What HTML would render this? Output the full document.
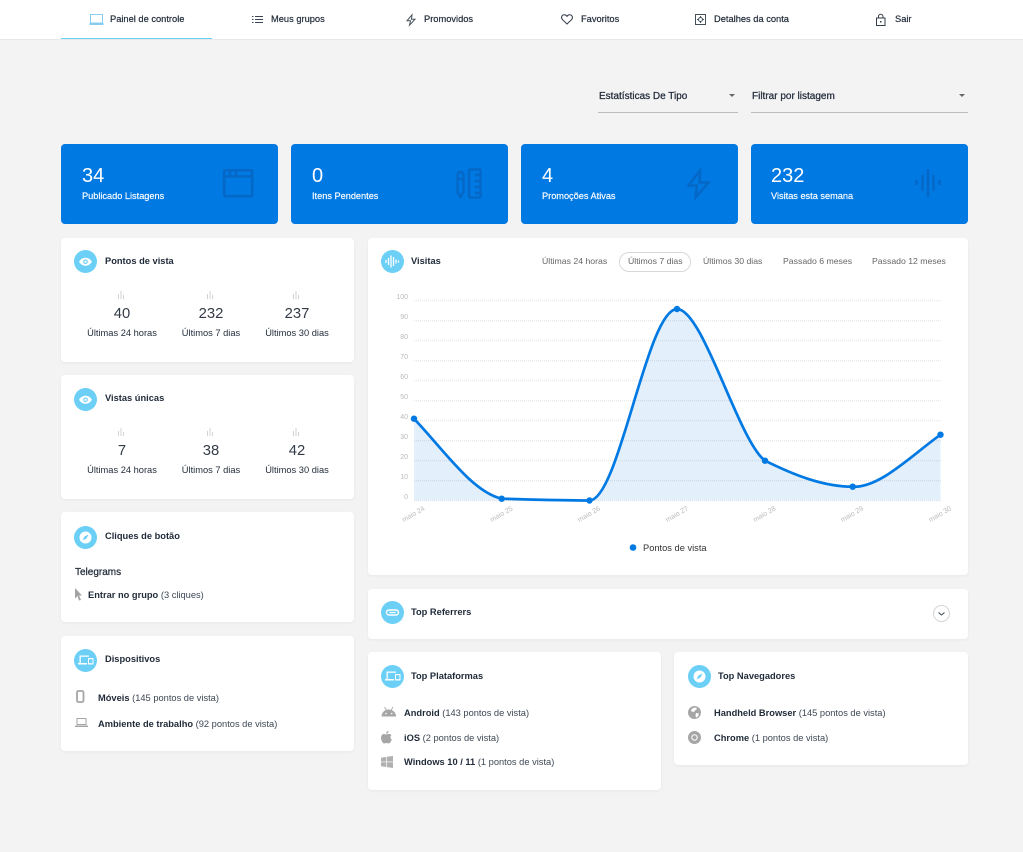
<!DOCTYPE html>
<html lang="pt"><head><meta charset="utf-8"><title>Painel de controle</title>
<style>
*{box-sizing:border-box}
html,body{margin:0;padding:0}
body{width:1023px;height:852px;background:#f3f3f3;position:relative;overflow:hidden;font-family:"Liberation Sans",sans-serif;color:#1f2a38;font-size:9.3px}
.t{position:absolute;line-height:14px;white-space:nowrap;margin-top:2px}
.b{font-weight:700}
.c{transform:translateX(-50%)}
.card{position:absolute;background:#fff;border-radius:4px;box-shadow:0 1px 3px rgba(0,0,0,.05)}
.stat{position:absolute;top:144px;width:217px;height:80px;background:#0079e3;border-radius:4px}
.num{position:absolute;left:21px;top:20px;font-size:20px;line-height:24px;color:#fff}
.lab{position:absolute;left:21px;top:45px;line-height:14px;color:#fff;font-size:9.2px;white-space:nowrap;-webkit-text-stroke:.15px #fff}
.big{font-size:14.8px;color:#333b47;margin-top:1px}
.g{color:#3d4754}
svg{position:absolute;overflow:visible}
.tab{color:#666;font-size:8.7px}
.sel{font-size:10px;-webkit-text-stroke:.25px #1f2a38}
.nav{margin-top:0;top:12px;-webkit-text-stroke:.2px #1f2a38}
</style></head><body>

<div style="position:absolute;left:0;top:0;width:1023px;height:40px;background:#fff;border-bottom:1px solid #e8e8e8"></div>
<div style="position:absolute;left:61px;top:38px;width:151px;height:1px;background:#6bcff6"></div>

<svg style="left:90px;top:14px" width="13" height="11" viewBox="0 0 13 11" fill="none" stroke="#86cdf0" stroke-width="1"><rect x=".5" y=".5" width="12" height="8.5"/><path d="M0 9.500h13v1H0z" fill="#86cdf0"/></svg>
<div class="t nav" style="left:110px">Painel de controle</div>

<svg style="left:252px;top:16px" width="11" height="7" viewBox="0 0 11 7" stroke="#3a4450" stroke-width="1"><path d="M3 .5h8M3 3.500h8M3 6.500h8M0 .5h1.500M0 3.500h1.500M0 6.500h1.500"/></svg>
<div class="t nav" style="left:271px">Meus grupos</div>

<svg style="left:406px;top:14px" width="10" height="12" viewBox="0 0 10 12" fill="none" stroke="#46505c" stroke-width="1"><path d="M6 .8 1 6.800h3.500L3.500 11.200 9 5.200H5.500z"/></svg>
<div class="t nav" style="left:424px">Promovidos</div>

<svg style="left:561px;top:14px" width="12" height="11" viewBox="0 0 12 11" fill="none" stroke="#333d49" stroke-width="1"><path d="M6 10 1.200 5.300C-.3 3.300 1 .8 3.300.8 4.500.8 5.400 1.400 6 2.300 6.600 1.400 7.500.8 8.700.8 11 .8 12.300 3.300 10.800 5.300z"/></svg>
<div class="t nav" style="left:581px">Favoritos</div>

<svg style="left:695px;top:14px" width="11" height="11" viewBox="0 0 11 11" fill="none" stroke="#46505c" stroke-width="1"><rect x=".5" y=".5" width="10" height="10"/><circle cx="5.500" cy="5.500" r="2"/><path d="M5.500 2v1.200M5.500 7.800V9M2 5.500h1.200M7.800 5.500H9"/></svg>
<div class="t nav" style="left:714px">Detalhes da conta</div>

<svg style="left:876px;top:14px" width="10" height="12" viewBox="0 0 10 12" fill="none" stroke="#333d49" stroke-width="1"><rect x=".5" y="4" width="8.500" height="7.500"/><path d="M2.500 4V2.500a2.200 2.200 0 0 1 4.500 0V4"/><path d="M4 7h1.500v1.500H4z" fill="#333d49" stroke="none"/></svg>
<div class="t nav" style="left:895px">Sair</div>

<div class="t sel" style="left:599px;top:87px;margin-top:3px">Estatísticas De Tipo</div>
<div style="position:absolute;left:598px;top:112px;width:140px;height:1px;background:#bdbdbd"></div>
<div style="position:absolute;left:729px;top:94px;border:3.5px solid transparent;border-top-color:#666;border-bottom:0"></div>
<div class="t sel" style="left:752px;top:87px;margin-top:3px">Filtrar por listagem</div>
<div style="position:absolute;left:751px;top:112px;width:217px;height:1px;background:#bdbdbd"></div>
<div style="position:absolute;left:959px;top:94px;border:3.5px solid transparent;border-top-color:#666;border-bottom:0"></div>

<div class="stat" style="left:61px"><div class="num">34</div><div class="lab">Publicado Listagens</div>
<svg style="left:162px;top:25px" width="31" height="29" viewBox="0 0 31 29" fill="none" stroke="#0568c6" stroke-width="2.500"><rect x="1.200" y="1.200" width="28" height="26" rx="1"/><path d="M1.200 7.500h28M7 1.500v6M13 1.500v6"/></svg></div>
<div class="stat" style="left:291px"><div class="num">0</div><div class="lab">Itens Pendentes</div>
<svg style="left:165px;top:24px" width="26" height="31" viewBox="0 0 26 31" fill="none" stroke="#0568c6" stroke-width="2.400"><path d="M1.500 7a3 3 0 0 1 6 0v17l-3 5-3-5zM1.500 11h6"/><rect x="13" y="1.500" width="11.500" height="28" rx="1"/><path d="M19 7h5.500M19 13h5.500M19 19h5.500M19 25h5.500"/></svg></div>
<div class="stat" style="left:521px"><div class="num">4</div><div class="lab">Promoções Ativas</div>
<svg style="left:166px;top:25px" width="23" height="30" viewBox="0 0 23 30" fill="none" stroke="#0568c6" stroke-width="2.500"><path d="M13 1.500 1.500 16.500H10L8.500 28.500 21.500 13.500H12.500z"/></svg></div>
<div class="stat" style="left:751px"><div class="num" style="left:20px">232</div><div class="lab" style="left:20px">Visitas esta semana</div>
<svg style="left:164px;top:25px" width="26" height="28" viewBox="0 0 26 28" stroke="#0568c6" stroke-width="2.500"><path d="M1.500 11v5M7.500 6v16M13 0v28M18.500 6v16M24.500 11v5"/></svg></div>

<!-- Pontos de vista -->
<div class="card" style="left:61px;top:238px;width:293px;height:124px"></div>
<svg style="left:74px;top:250px" width="23" height="23" viewBox="0 0 23 23"><circle cx="11.500" cy="11.500" r="11.500" fill="#6bcff6"/><path d="M5 11.800C7 8.800 9 7.800 11.500 7.800S16 8.800 18 11.800C16 14.800 14 15.800 11.500 15.800S7 14.800 5 11.800z" fill="#fff"/><circle cx="11.500" cy="11.800" r="2.300" fill="#6bcff6"/><circle cx="11.500" cy="11.800" r="1.200" fill="#fff"/></svg>
<div class="t b" style="left:105px;top:252px">Pontos de vista</div>
<svg style="left:118px;top:291px" width="7" height="8" stroke="#d2d2d2" stroke-width="1"><path d="M.5 8V3M3 8V0M5.500 8V4"/></svg>
<svg style="left:207px;top:291px" width="7" height="8" stroke="#d2d2d2" stroke-width="1"><path d="M.5 8V3M3 8V0M5.500 8V4"/></svg>
<svg style="left:293px;top:291px" width="7" height="8" stroke="#d2d2d2" stroke-width="1"><path d="M.5 8V3M3 8V0M5.500 8V4"/></svg>
<div class="t c big" style="left:122px;top:306px">40</div>
<div class="t c big" style="left:211px;top:306px">232</div>
<div class="t c big" style="left:297px;top:306px">237</div>
<div class="t c" style="left:122px;top:324px">Últimas 24 horas</div>
<div class="t c" style="left:211px;top:324px">Últimos 7 dias</div>
<div class="t c" style="left:297px;top:324px">Últimos 30 dias</div>

<!-- Vistas únicas -->
<div class="card" style="left:61px;top:375px;width:293px;height:124px"></div>
<svg style="left:74px;top:388px" width="23" height="23" viewBox="0 0 23 23"><circle cx="11.500" cy="11.500" r="11.500" fill="#6bcff6"/><path d="M5 11.800C7 8.800 9 7.800 11.500 7.800S16 8.800 18 11.800C16 14.800 14 15.800 11.500 15.800S7 14.800 5 11.800z" fill="#fff"/><circle cx="11.500" cy="11.800" r="2.300" fill="#6bcff6"/><circle cx="11.500" cy="11.800" r="1.200" fill="#fff"/></svg>
<div class="t b" style="left:105px;top:389px">Vistas únicas</div>
<svg style="left:118px;top:428px" width="7" height="8" stroke="#d2d2d2" stroke-width="1"><path d="M.5 8V3M3 8V0M5.500 8V4"/></svg>
<svg style="left:207px;top:428px" width="7" height="8" stroke="#d2d2d2" stroke-width="1"><path d="M.5 8V3M3 8V0M5.500 8V4"/></svg>
<svg style="left:293px;top:428px" width="7" height="8" stroke="#d2d2d2" stroke-width="1"><path d="M.5 8V3M3 8V0M5.500 8V4"/></svg>
<div class="t c big" style="left:122px;top:443px">7</div>
<div class="t c big" style="left:211px;top:443px">38</div>
<div class="t c big" style="left:297px;top:443px">42</div>
<div class="t c" style="left:122px;top:461px">Últimas 24 horas</div>
<div class="t c" style="left:211px;top:461px">Últimos 7 dias</div>
<div class="t c" style="left:297px;top:461px">Últimos 30 dias</div>

<!-- Cliques -->
<div class="card" style="left:61px;top:512px;width:293px;height:110px"></div>
<svg style="left:74px;top:526px" width="23" height="23" viewBox="0 0 23 23"><circle cx="11.500" cy="11.500" r="11.500" fill="#6bcff6"/><circle cx="11.500" cy="11.500" r="6" fill="#fff"/><path d="M14.500 8.500 12.500 12.500 8.500 14.500 10.500 10.500z" fill="#6bcff6"/></svg>
<div class="t b" style="left:105px;top:527px">Cliques de botão</div>
<div class="t sel" style="left:75px;top:564px">Telegrams</div>
<svg style="left:74px;top:588px" width="9" height="13" viewBox="0 0 9 13"><path d="M1 0 8 7.500H5L7 12 5 12.500 3.500 8 1 10.500z" fill="#a3a3a3"/></svg>
<div class="t" style="left:88px;top:586px"><span class="b">Entrar no grupo</span> <span class="g">(3 cliques)</span></div>

<!-- Dispositivos -->
<div class="card" style="left:61px;top:636px;width:293px;height:115px"></div>
<svg style="left:74px;top:649px" width="23" height="23" viewBox="0 0 23 23"><circle cx="11.500" cy="11.500" r="11.500" fill="#6bcff6"/><path d="M5.500 6.500h9.500v1.200H6.800v6.300h6.200v1.500H4V14h1.500z" fill="#fff"/><rect x="14" y="9" width="5.500" height="6.500" rx=".6" fill="#fff"/><rect x="15" y="10.200" width="3.500" height="4" fill="#6bcff6"/></svg>
<div class="t b" style="left:105px;top:650px">Dispositivos</div>
<svg style="left:76px;top:690px" width="9" height="13" viewBox="0 0 9 13" fill="none" stroke="#a6a6a6" stroke-width="1.800"><rect x="1" y="1" width="6.500" height="11" rx="1.500"/></svg>
<div class="t" style="left:98px;top:689px"><span class="b">Móveis</span> <span class="g">(145 pontos de vista)</span></div>
<svg style="left:75px;top:718px" width="13" height="9" viewBox="0 0 13 9"><path d="M2 .5h9v6H2z" fill="none" stroke="#a6a6a6"/><path d="M0 7.500h13V9H0z" fill="#a6a6a6"/></svg>
<div class="t" style="left:98px;top:715px"><span class="b">Ambiente de trabalho</span> <span class="g">(92 pontos de vista)</span></div>

<!-- Visitas chart -->
<div class="card" style="left:368px;top:238px;width:600px;height:337px"></div>
<svg style="left:381px;top:250px" width="23" height="23" viewBox="0 0 23 23"><circle cx="11.500" cy="11.500" r="11.500" fill="#6bcff6"/><path d="M5 10v3M7.500 8v7M10 5.500v12M12.500 7v9M15 9.500v4M17.500 10.500v2" stroke="#fff" stroke-width="1.300"/></svg>
<div class="t b" style="left:411px;top:252px">Visitas</div>
<div class="t tab" style="left:542px;top:252px">Últimas 24 horas</div>
<div style="position:absolute;left:619px;top:252px;width:72px;height:20px;border:1px solid #d8d8d8;border-radius:10px"></div>
<div class="t tab" style="left:628px;top:252px">Últimos 7 dias</div>
<div class="t tab" style="left:703px;top:252px">Últimos 30 dias</div>
<div class="t tab" style="left:783px;top:252px">Passado 6 meses</div>
<div class="t tab" style="left:872px;top:252px">Passado 12 meses</div>

<svg style="left:0;top:0" width="1023" height="852" viewBox="0 0 1023 852">
<g stroke="#e2e2e2" stroke-width="1" stroke-dasharray="1 1" fill="none"><path d="M414 300.700H941M414 320.700H941M414 340.700H941M414 360.700H941M414 380.700H941M414 400.700H941M414 420.700H941M414 440.700H941M414 460.700H941M414 480.700H941M414 500.700H941"/></g>
<path d="M414 418.700C443 449 472 492 501.700 498.700C531 499.500 560 500.500 589.500 500.500C619 500.500 647 309 677 309C703 309 738 440 765 460.700C794 475 823 486.700 852.700 486.700C880 488 912 455 940.500 434.700V500.500H414z" fill="#0079e3" fill-opacity=".11"/>
<path d="M414 418.700C443 449 472 492 501.700 498.700C531 499.500 560 500.500 589.500 500.500C619 500.500 647 309 677 309C703 309 738 440 765 460.700C794 475 823 486.700 852.700 486.700C880 488 912 455 940.500 434.700" fill="none" stroke="#0079e3" stroke-width="2.700"/>
<g fill="#0079e3"><circle cx="414" cy="418.700" r="3.200"/><circle cx="501.700" cy="498.700" r="3.200"/><circle cx="589.500" cy="500.500" r="3.200"/><circle cx="677" cy="309" r="3.200"/><circle cx="765" cy="460.700" r="3.200"/><circle cx="852.700" cy="486.700" r="3.200"/><circle cx="940.500" cy="434.700" r="3.200"/><circle cx="633" cy="547.500" r="3.300"/></g>
<g font-family="Liberation Sans, sans-serif" font-size="7" fill="#bbb" text-anchor="end">
<text x="408" y="299">100</text><text x="408" y="319">90</text><text x="408" y="339">80</text><text x="408" y="359">70</text><text x="408" y="379">60</text><text x="408" y="399">50</text><text x="408" y="419">40</text><text x="408" y="439">30</text><text x="408" y="459">20</text><text x="408" y="479">10</text><text x="408" y="499">0</text>
</g>
<g font-family="Liberation Sans, sans-serif" font-size="7" fill="#bbb" text-anchor="middle">
<text transform="translate(414.500 516) rotate(-30)">maio 24</text>
<text transform="translate(502.500 516) rotate(-30)">maio 25</text>
<text transform="translate(590 516) rotate(-30)">maio 26</text>
<text transform="translate(678 516) rotate(-30)">maio 27</text>
<text transform="translate(765.500 516) rotate(-30)">maio 28</text>
<text transform="translate(853 516) rotate(-30)">maio 29</text>
<text transform="translate(941 516) rotate(-30)">maio 30</text>
</g>
</svg>
<div class="t" style="left:643px;top:539px;color:#333">Pontos de vista</div>

<!-- Top Referrers -->
<div class="card" style="left:368px;top:589px;width:600px;height:50px"></div>
<svg style="left:381px;top:601px" width="23" height="23" viewBox="0 0 23 23"><circle cx="11.500" cy="11.500" r="11.500" fill="#6bcff6"/><rect x="5.500" y="9" width="12" height="5" rx="2.500" fill="none" stroke="#fff" stroke-width="1.400"/><path d="M8.500 11.500h6" stroke="#fff" stroke-width="1.200"/></svg>
<div class="t b" style="left:411px;top:603px">Top Referrers</div>
<svg style="left:933px;top:605px" width="17" height="17" viewBox="0 0 17 17" fill="none"><circle cx="8.500" cy="8.500" r="8" stroke="#d4d4d4"/><path d="M5.500 7.500 8.500 10 11.500 7.500" stroke="#3a4450" stroke-width="1"/></svg>

<!-- Top Plataformas -->
<div class="card" style="left:368px;top:652px;width:293px;height:138px"></div>
<svg style="left:381px;top:665px" width="23" height="23" viewBox="0 0 23 23"><circle cx="11.500" cy="11.500" r="11.500" fill="#6bcff6"/><path d="M5.500 6.500h9.500v1.200H6.800v6.300h6.200v1.500H4V14h1.500z" fill="#fff"/><rect x="14" y="9" width="5.500" height="6.500" rx=".6" fill="#fff"/><rect x="15" y="10.200" width="3.500" height="4" fill="#6bcff6"/></svg>
<div class="t b" style="left:411px;top:667px">Top Plataformas</div>
<svg style="left:381px;top:706px" width="16" height="11" viewBox="0 0 16 11"><path d="M.5 10.500C.8 6.500 3.500 3.500 7.700 3.500S14.800 6.500 15.200 10.500z" fill="#a6a6a6"/><path d="M3.500 1 5.300 4M12 1 10.200 4" stroke="#a6a6a6" stroke-width=".8"/><circle cx="5" cy="7.500" r=".8" fill="#fff"/><circle cx="10.700" cy="7.500" r=".8" fill="#fff"/></svg>
<div class="t" style="left:404px;top:704px"><span class="b">Android</span> <span class="g">(143 pontos de vista)</span></div>
<svg style="left:381px;top:731px" width="11" height="13" viewBox="0 0 11 13"><path d="M7.500 0C7.600 1.500 6.500 2.800 5.200 2.700 5.100 1.300 6.200.1 7.500 0zM5.400 3.500C6 3.500 6.900 2.900 8 2.900 9 2.900 10 3.500 10.500 4.300 9.100 5.100 9 7.600 10.800 8.400 10.300 10 9 12.500 7.700 12.500 7 12.500 6.500 12 5.500 12S4 12.500 3.300 12.500C1.900 12.500 0 9.500 0 6.800 0 4.300 1.600 3 3 3 4 3 4.800 3.500 5.400 3.500z" fill="#a6a6a6"/></svg>
<div class="t" style="left:404px;top:729px"><span class="b">iOS</span> <span class="g">(2 pontos de vista)</span></div>
<svg style="left:381px;top:756px" width="12" height="12" viewBox="0 0 12 12" fill="#b0b0b0"><path d="M0 1.800 5.300.9v4.700H0zM6 .8 12 0v5.600H6zM0 6.300h5.300V11L0 10.200zM6 6.300h6V12l-6-.9z"/></svg>
<div class="t" style="left:404px;top:753px"><span class="b">Windows 10 / 11</span> <span class="g">(1 pontos de vista)</span></div>

<!-- Top Navegadores -->
<div class="card" style="left:674px;top:652px;width:294px;height:113px"></div>
<svg style="left:688px;top:665px" width="23" height="23" viewBox="0 0 23 23"><circle cx="11.500" cy="11.500" r="11.500" fill="#6bcff6"/><circle cx="11.500" cy="11.500" r="6" fill="#fff"/><path d="M14.500 8.500 12.500 12.500 8.500 14.500 10.500 10.500z" fill="#6bcff6"/></svg>
<div class="t b" style="left:718px;top:667px">Top Navegadores</div>
<svg style="left:688px;top:706px" width="13" height="13" viewBox="0 0 13 13"><circle cx="6.500" cy="6.500" r="6.500" fill="#a6a6a6"/><path d="M5 2 8 1.500 9 3 7 4.500 6 6 3.500 5.500 3 4zM8 7l3 .5-1 3-2 1-.5-2.500z" fill="#fff"/></svg>
<div class="t" style="left:714px;top:704px"><span class="b">Handheld Browser</span> <span class="g">(145 pontos de vista)</span></div>
<svg style="left:688px;top:731px" width="13" height="13" viewBox="0 0 13 13"><circle cx="6.500" cy="6.500" r="6.500" fill="#a6a6a6"/><circle cx="6.500" cy="6.500" r="3.200" fill="#fff"/><circle cx="6.500" cy="6.500" r="2.200" fill="#a6a6a6"/></svg>
<div class="t" style="left:714px;top:729px"><span class="b">Chrome</span> <span class="g">(1 pontos de vista)</span></div>

</body></html>
